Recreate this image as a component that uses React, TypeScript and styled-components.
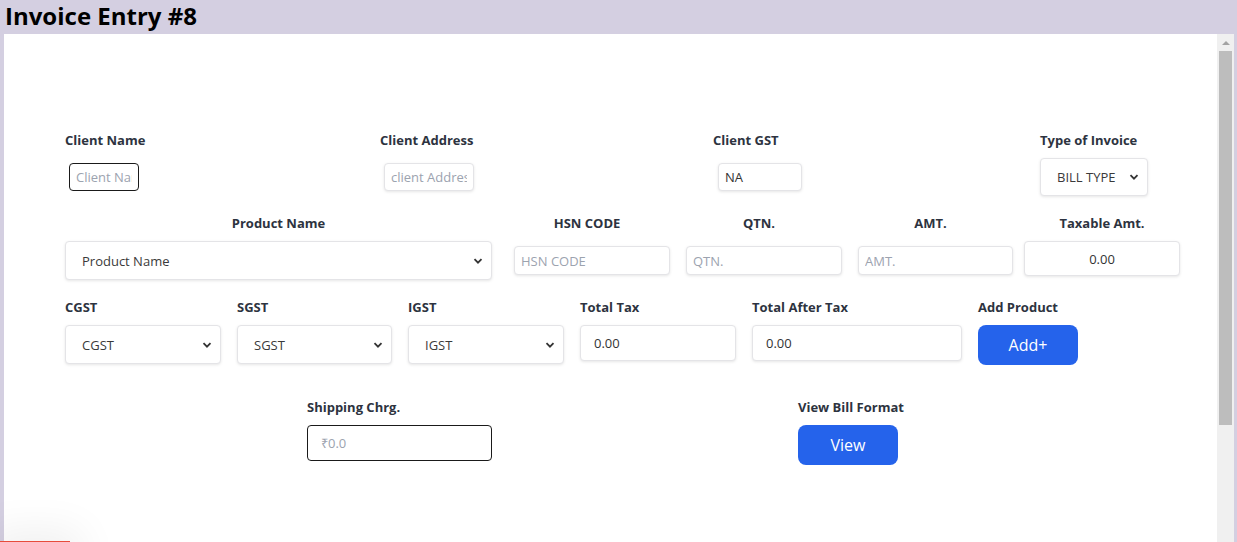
import styled, { createGlobalStyle } from "styled-components";

const GlobalStyle = createGlobalStyle`
  html, body {
    margin: 0;
    padding: 0;
    height: 100%;
    overflow: hidden;
    background-color: #d4cfe1;
    font-family: "Open Sans", "Segoe UI", sans-serif;
  }
  * {
    box-sizing: border-box;
  }
`;

const Page = styled.div`
  padding: 0 3px 0 4px;
`;

const Title = styled.h1`
  margin: 0;
  height: 34px;
  line-height: 32px;
  font-size: 24px;
  font-weight: 700;
  color: #000;
  padding-left: 1px;
`;

const Panel = styled.div`
  display: flex;
  background-color: #ffffff;
  height: 508px;
  overflow: hidden;
`;

const Content = styled.div`
  flex: 1;
  min-width: 0;
  overflow: hidden;
`;

const ScrollTrack = styled.div`
  width: 17px;
  flex-shrink: 0;
  display: flex;
  flex-direction: column;
  background-color: #f0f0f0;
`;

const ScrollArrow = styled.div`
  height: 17px;
  display: flex;
  align-items: center;
  justify-content: center;

  &::after {
    content: "";
    width: 0;
    height: 0;
    border-left: 4px solid transparent;
    border-right: 4px solid transparent;
    border-bottom: 4px solid #a3a3a3;
  }
`;

const ScrollThumb = styled.div`
  height: 374px;
  margin: 0 2px;
  background-color: #bdbdbd;
`;

const Form = styled.div`
  padding: 96px 0 0 61px;
`;

const TopRow = styled.div`
  display: grid;
  grid-template-columns: 315px 333px 327px 108px;
`;

const ProductRow = styled.div`
  display: grid;
  grid-template-columns: 449px 172px 172px 166px 156px;
  margin-top: 17px;
`;

const TaxRow = styled.div`
  display: flex;
  gap: 16px;
  margin-top: 17px;
`;

const FooterRow = styled.div`
  display: flex;
  gap: 306px;
  padding-left: 242px;
  margin-top: 32px;
`;

const Column = styled.div<{ $w?: number; $center?: boolean }>`
  display: flex;
  flex-direction: column;
  align-items: ${(p) => (p.$center ? "center" : "flex-start")};
  width: ${(p) => (p.$w ? `${p.$w}px` : "auto")};
`;

const Label = styled.label<{ $nudge?: number }>`
  display: block;
  height: 20px;
  line-height: 20px;
  margin-right: ${(p) => p.$nudge ?? 0}px;
  font-size: 13px;
  font-weight: 700;
  color: #2d3340;
  white-space: nowrap;
`;

const Slot = styled.div<{ $h: number; $top?: boolean }>`
  display: flex;
  align-items: ${(p) => (p.$top ? "flex-start" : "center")};
  height: ${(p) => p.$h}px;
  margin-top: 8px;
  width: 100%;
`;

const Input = styled.input<{
  $w: number;
  $h: number;
  $dark?: boolean;
  $pad?: number;
  $ml?: number;
  $center?: boolean;
}>`
  width: ${(p) => p.$w}px;
  height: ${(p) => p.$h}px;
  margin-left: ${(p) => p.$ml ?? 0}px;
  padding: 0 ${(p) => p.$pad ?? 6}px;
  border: 1px solid ${(p) => (p.$dark ? "#1a1a1a" : "#e4e4e7")};
  border-radius: 4px;
  box-shadow: ${(p) => (p.$dark ? "none" : "0 1px 3px rgba(0, 0, 0, 0.1)")};
  font-family: inherit;
  font-size: 13px;
  color: #333;
  text-align: ${(p) => (p.$center ? "center" : "left")};
  outline: none;
  background: #fff;

  &::placeholder {
    color: #9ca3af;
  }
`;

const SelectBox = styled.div<{ $w: number; $h: number }>`
  position: relative;
  width: ${(p) => p.$w}px;
  height: ${(p) => p.$h}px;
`;

const Select = styled.select`
  appearance: none;
  width: 100%;
  height: 100%;
  padding: 0 28px 0 16px;
  border: 1px solid #e4e4e7;
  border-radius: 4px;
  box-shadow: 0 1px 3px rgba(0, 0, 0, 0.1);
  background: #fff;
  font-family: inherit;
  font-size: 13px;
  color: #3a3a3a;
  outline: none;
`;

const Chevron = styled.svg`
  position: absolute;
  right: 9px;
  top: 50%;
  transform: translateY(-50%);
  pointer-events: none;
`;

const Button = styled.button`
  width: 100px;
  height: 40px;
  border: none;
  border-radius: 8px;
  background-color: #2563eb;
  color: #fff;
  font-family: inherit;
  font-size: 16px;
  cursor: pointer;
`;

const Toast = styled.div`
  position: fixed;
  left: 0;
  top: 541px;
  width: 70px;
  height: 40px;
  background: #fff;
  border-top: 1px solid #e74c3c;
  box-shadow: 0 0 40px 12px rgba(0, 0, 0, 0.06);
`;

const Dropdown = ({ w, h, text }: { w: number; h: number; text: string }) => (
  <SelectBox $w={w} $h={h}>
    <Select defaultValue="">
      <option value="">{text}</option>
    </Select>
    <Chevron width="10" height="10" viewBox="0 0 10 10">
      <path d="M1.5 3.2 L5 6.7 L8.5 3.2" fill="none" stroke="#333" strokeWidth="1.8" />
    </Chevron>
  </SelectBox>
);

export default function App() {
  return (
    <Page>
      <GlobalStyle />
      <Title>Invoice Entry #8</Title>
      <Panel>
        <Content>
          <Form>
            <TopRow>
              <Column>
                <Label>Client Name</Label>
                <Slot $h={38}>
                  <Input $w={70} $h={28} $dark $ml={4} placeholder="Client Name" />
                </Slot>
              </Column>
              <Column>
                <Label>Client Address</Label>
                <Slot $h={38}>
                  <Input $w={90} $h={28} $ml={4} placeholder="client Address" />
                </Slot>
              </Column>
              <Column>
                <Label>Client GST</Label>
                <Slot $h={38}>
                  <Input $w={84} $h={28} $ml={5} defaultValue="NA" />
                </Slot>
              </Column>
              <Column>
                <Label>Type of Invoice</Label>
                <Slot $h={38}>
                  <Dropdown w={108} h={38} text="BILL TYPE" />
                </Slot>
              </Column>
            </TopRow>

            <ProductRow>
              <Column $w={427} $center>
                <Label>Product Name</Label>
                <Slot $h={39}>
                  <Dropdown w={427} h={39} text="Product Name" />
                </Slot>
              </Column>
              <Column $w={156} $center>
                <Label $nudge={10}>HSN CODE</Label>
                <Slot $h={39}>
                  <Input $w={156} $h={29} placeholder="HSN CODE" />
                </Slot>
              </Column>
              <Column $w={156} $center>
                <Label $nudge={10}>QTN.</Label>
                <Slot $h={39}>
                  <Input $w={156} $h={29} placeholder="QTN." />
                </Slot>
              </Column>
              <Column $w={155} $center>
                <Label $nudge={10}>AMT.</Label>
                <Slot $h={39}>
                  <Input $w={155} $h={29} placeholder="AMT." />
                </Slot>
              </Column>
              <Column $w={156} $center>
                <Label>Taxable Amt.</Label>
                <Slot $h={39} $top>
                  <Input $w={156} $h={35} $center defaultValue="0.00" readOnly />
                </Slot>
              </Column>
            </ProductRow>

            <TaxRow>
              <Column $w={156}>
                <Label>CGST</Label>
                <Slot $h={40} $top>
                  <Dropdown w={156} h={39} text="CGST" />
                </Slot>
              </Column>
              <Column $w={155}>
                <Label>SGST</Label>
                <Slot $h={40} $top>
                  <Dropdown w={155} h={39} text="SGST" />
                </Slot>
              </Column>
              <Column $w={156}>
                <Label>IGST</Label>
                <Slot $h={40} $top>
                  <Dropdown w={156} h={39} text="IGST" />
                </Slot>
              </Column>
              <Column $w={156}>
                <Label>Total Tax</Label>
                <Slot $h={40} $top>
                  <Input $w={156} $h={36} $pad={13} defaultValue="0.00" readOnly />
                </Slot>
              </Column>
              <Column $w={210}>
                <Label>Total After Tax</Label>
                <Slot $h={40} $top>
                  <Input $w={210} $h={36} $pad={13} defaultValue="0.00" readOnly />
                </Slot>
              </Column>
              <Column $w={100}>
                <Label>Add Product</Label>
                <Slot $h={40} $top>
                  <Button>Add+</Button>
                </Slot>
              </Column>
            </TaxRow>

            <FooterRow>
              <Column $w={185}>
                <Label>Shipping Chrg.</Label>
                <Slot $h={40} $top>
                  <Input $w={185} $h={36} $dark $pad={13} placeholder="₹0.0" />
                </Slot>
              </Column>
              <Column $w={108}>
                <Label>View Bill Format</Label>
                <Slot $h={40} $top>
                  <Button>View</Button>
                </Slot>
              </Column>
            </FooterRow>
          </Form>
        </Content>
        <ScrollTrack>
          <ScrollArrow />
          <ScrollThumb />
        </ScrollTrack>
      </Panel>
      <Toast />
    </Page>
  );
}
